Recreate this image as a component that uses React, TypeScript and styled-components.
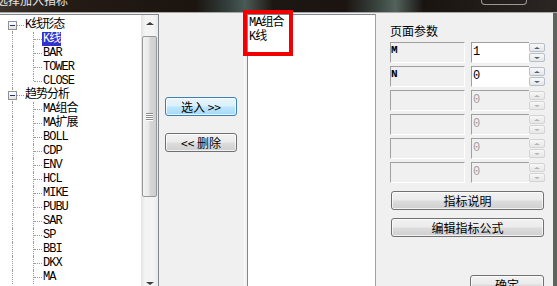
import React from "react";
import styled, { createGlobalStyle, css } from "styled-components";

const GlobalStyle = createGlobalStyle`
  html, body { margin: 0; padding: 0; }
  body {
    width: 557px;
    height: 286px;
    overflow: hidden;
    background: #1a1512;
    font-family: "Noto Sans CJK SC", "Liberation Sans", sans-serif;
    font-size: 12px;
  }
  * { box-sizing: border-box; }
`;

const Window = styled.div`
  width: 557px;
  height: 286px;
  overflow: hidden;
  display: flex;
  flex-direction: column;
  position: relative;
`;

const TitleBar = styled.div`
  height: 13px;
  flex: none;
  display: flex;
  align-items: flex-end;
  overflow: hidden;
  background: linear-gradient(90deg, #3d332b 0%, #241b15 12%, #1b140f 35%, #33403d 41%, #4b5a55 44%, #1d1713 49%, #1b1411 62%, #3b4742 68%, #53625c 71%, #1a1411 76%, #2b2623 100%);
  border-bottom: 1px solid #a7a7a7;
`;

const TitleText = styled.span`
  color: #e6e6e6;
  font-size: 12px;
  line-height: 12px;
  margin: 0 0 6px -4px;
  white-space: nowrap;
`;

const CaptionButton = styled.span`
  align-self: flex-start;
  width: 46px;
  height: 5px;
  margin-left: auto;
  margin-right: 30px;
  border: 1px solid rgba(220, 220, 220, 0.65);
  border-top: none;
  border-radius: 0 0 4px 4px;
`;

const Body = styled.div`
  flex: 1;
  display: flex;
  background: #f0f0f0;
  border-right: 4px solid #5f625f;
  padding-top: 1px;
  min-height: 0;
`;

const monoFont = css`
  font-family: "Liberation Mono", "Noto Sans CJK SC", monospace;
  font-size: 12px;
  letter-spacing: -1px;
  line-height: 14px;
`;

/* ---------- tree ---------- */

const TreePanel = styled.div`
  width: 159px;
  height: 278px;
  flex: none;
  display: flex;
  background: #fff;
  border-top: 1px solid #828790;
  border-right: 1px solid #828790;
`;

const TreeList = styled.div`
  flex: 1;
  padding-top: 3px;
  overflow: hidden;
`;

const TreeRow = styled.div`
  display: flex;
  height: 14px;
  ${monoFont};
  color: #000;
`;

const dotted = "1px dotted #9a9a9a";

const Rail = styled.span`
  width: 24px;
  height: 14px;
  flex: none;
  position: relative;
  &::before {
    content: "";
    position: absolute;
    left: 12px;
    top: 0;
    bottom: 0;
    border-left: ${dotted};
  }
`;

const Branch = styled.span<{ $last?: boolean }>`
  width: 18px;
  height: 14px;
  flex: none;
  position: relative;
  &::before {
    content: "";
    position: absolute;
    left: 9px;
    top: 0;
    bottom: ${(p) => (p.$last ? "7px" : "0")};
    border-left: ${dotted};
  }
  &::after {
    content: "";
    position: absolute;
    left: 10px;
    width: 8px;
    top: 7px;
    border-top: ${dotted};
  }
`;

const ExpanderCell = styled.span<{ $first?: boolean }>`
  width: 24px;
  height: 14px;
  flex: none;
  position: relative;
  &::before {
    content: "";
    position: absolute;
    left: 12px;
    top: ${(p) => (p.$first ? "11px" : "0")};
    bottom: 0;
    border-left: ${dotted};
  }
  &::after {
    content: "";
    position: absolute;
    left: 17px;
    width: 7px;
    top: 7px;
    border-top: ${dotted};
  }
`;

const ExpanderBox = styled.span`
  position: absolute;
  left: 8px;
  top: 3px;
  width: 9px;
  height: 9px;
  z-index: 1;
  border: 1px solid #919191;
  background: linear-gradient(180deg, #ffffff, #e2e2e2);
  &::after {
    content: "";
    position: absolute;
    left: 1px;
    top: 3px;
    width: 5px;
    border-top: 1px solid #1e3287;
  }
`;

const NodeLabel = styled.span<{ $selected?: boolean }>`
  padding: 0 1px;
  height: 14px;
  white-space: nowrap;
  ${(p) =>
    p.$selected &&
    css`
      background: #3131cc;
      color: #fff;
    `}
`;

/* ---------- scrollbar ---------- */

const ScrollBar = styled.div`
  width: 17px;
  flex: none;
  display: flex;
  flex-direction: column;
  background: linear-gradient(90deg, #e4e4e4, #f4f4f4 25%, #f4f4f4 75%, #e9e9e9);
`;

const ScrollButton = styled.div`
  height: 17px;
  flex: none;
  display: flex;
  align-items: center;
  justify-content: center;
`;

const Arrow = styled.span<{ $dir: "up" | "down"; $size?: number; $color?: string }>`
  width: 0;
  height: 0;
  border-left: ${(p) => p.$size ?? 4}px solid transparent;
  border-right: ${(p) => p.$size ?? 4}px solid transparent;
  ${(p) =>
    p.$dir === "up"
      ? css`border-bottom: ${(p.$size ?? 4) - 1}px solid ${p.$color ?? "#3c3c3c"};`
      : css`border-top: ${(p.$size ?? 4) - 1}px solid ${p.$color ?? "#3c3c3c"};`}
`;

const Thumb = styled.div`
  height: 161px;
  margin: 4px 1px 0 1px;
  border: 1px solid #979797;
  border-radius: 2px;
  background: linear-gradient(90deg, #f3f3f3, #e8e8e8 45%, #d6d6d6 55%, #cfcfcf);
  display: flex;
  flex-direction: column;
  align-items: center;
  justify-content: center;
  gap: 1px;
`;

const Grip = styled.span`
  width: 7px;
  height: 1px;
  background: #8a8a8a;
  box-shadow: 0 1px 0 #fff;
`;

const Track = styled.div`
  flex: 1;
`;

/* ---------- middle ---------- */

const Middle = styled.div`
  width: 86px;
  flex: none;
  display: flex;
  flex-direction: column;
  gap: 17px;
  padding: 83px 0 0 6px;
  border-right: 1px solid #fcfcfc;
`;

const Button = styled.button<{ $w: number; $focused?: boolean }>`
  width: ${(p) => p.$w}px;
  height: 19px;
  padding: 0;
  flex: none;
  font-family: "Noto Sans CJK SC", "Liberation Sans", sans-serif;
  font-size: 12px;
  line-height: 17px;
  color: #000;
  border: 1px solid #707070;
  border-radius: 3px;
  background: linear-gradient(180deg, #f2f2f2 0%, #ebebeb 48%, #dddddd 52%, #cfcfcf 100%);
  box-shadow: inset 0 0 0 1px rgba(255, 255, 255, 0.7);
  white-space: pre;
  ${(p) =>
    p.$focused &&
    css`
      border-color: #3c7fb1;
      background: linear-gradient(180deg, #eaf6fd 0%, #d9f0fc 48%, #bee6fd 52%, #a7d9f5 100%);
    `}
`;

/* ---------- list ---------- */

const ListBox = styled.div`
  width: 129px;
  flex: none;
  margin-left: 2px;
  background: #fff;
  border-top: 1px solid #828790;
  border-left: 1px solid #828790;
  border-right: 1px solid #a0a0a0;
  padding: 1px 0 0 1px;
`;

const ListItem = styled.div`
  ${monoFont};
  height: 14px;
  color: #000;
`;

/* ---------- params ---------- */

const RightPanel = styled.div`
  flex: 1;
  display: flex;
  flex-direction: column;
  padding: 9px 0 0 14px;
`;

const PanelTitle = styled.div`
  font-size: 12px;
  line-height: 16px;
  height: 16px;
  color: #000;
  margin-bottom: 3px;
`;

const ParamList = styled.div`
  display: flex;
  flex-direction: column;
  gap: 3px;
`;

const ParamRow = styled.div`
  display: flex;
  height: 21px;
`;

const sunken = css`
  border-style: solid;
  border-width: 1px;
  border-color: #a0a0a0 #ffffff #ffffff #a0a0a0;
`;

const ParamName = styled.div`
  width: 75px;
  height: 21px;
  margin-right: 6px;
  ${sunken};
  background: #f0f0f0;
  font-family: "Liberation Mono", monospace;
  font-weight: bold;
  font-size: 11px;
  line-height: 14px;
  color: #000;
`;

const SpinEdit = styled.div<{ $disabled?: boolean }>`
  width: 58px;
  height: 21px;
  ${sunken};
  border-right: none;
  background: ${(p) => (p.$disabled ? "#f0f0f0" : "#fff")};
  color: ${(p) => (p.$disabled ? "#a0a0a0" : "#000")};
  font-family: "Liberation Mono", monospace;
  font-size: 12px;
  line-height: 16px;
  padding: 1px 0 0 1px;
`;

const SpinButtons = styled.div`
  width: 16px;
  height: 21px;
  display: flex;
  flex-direction: column;
  gap: 1px;
  padding: 1px 0;
  background: #f0f0f0;
`;

const SpinHalf = styled.div<{ $disabled?: boolean }>`
  flex: 1;
  display: flex;
  align-items: center;
  justify-content: center;
  border: 1px solid ${(p) => (p.$disabled ? "#d4d4d4" : "#b6c0cc")};
  border-radius: 2px;
  background: linear-gradient(180deg, #f8f8f8, #e6e6e6);
`;

const ActionStack = styled.div`
  display: flex;
  flex-direction: column;
  padding-left: 1px;
`;

const Annotation = styled.div`
  position: absolute;
  left: 243px;
  top: 10px;
  width: 50px;
  height: 46px;
  border: 4px solid #f00000;
  pointer-events: none;
`;

type Root = { label: string; children: string[] };

const tree: Root[] = [
  { label: "K线形态", children: ["K线", "BAR", "TOWER", "CLOSE"] },
  {
    label: "趋势分析",
    children: ["MA组合", "MA扩展", "BOLL", "CDP", "ENV", "HCL", "MIKE", "PUBU", "SAR", "SP", "BBI", "DKX", "MA"],
  },
];

const params = [
  { name: "M", value: "1", enabled: true },
  { name: "N", value: "0", enabled: true },
  { name: "", value: "0", enabled: false },
  { name: "", value: "0", enabled: false },
  { name: "", value: "0", enabled: false },
  { name: "", value: "0", enabled: false },
];

export default function App() {
  return (
    <Window>
      <GlobalStyle />
      <TitleBar>
        <TitleText>选择加入指标</TitleText>
        <CaptionButton />
      </TitleBar>
      <Body>
        <TreePanel>
          <TreeList>
            {tree.map((root, ri) => (
              <React.Fragment key={root.label}>
                <TreeRow>
                  <ExpanderCell $first={ri === 0}>
                    <ExpanderBox />
                  </ExpanderCell>
                  <NodeLabel>{root.label}</NodeLabel>
                </TreeRow>
                {root.children.map((c, ci) => (
                  <TreeRow key={c}>
                    <Rail />
                    <Branch $last={ri === 0 && ci === root.children.length - 1} />
                    <NodeLabel $selected={ri === 0 && ci === 0}>{c}</NodeLabel>
                  </TreeRow>
                ))}
              </React.Fragment>
            ))}
          </TreeList>
          <ScrollBar>
            <ScrollButton>
              <Arrow $dir="up" />
            </ScrollButton>
            <Thumb>
              <Grip />
              <Grip />
              <Grip />
              <Grip />
            </Thumb>
            <Track />
            <ScrollButton>
              <Arrow $dir="down" />
            </ScrollButton>
          </ScrollBar>
        </TreePanel>

        <Middle>
          <Button $w={72} $focused>{"选入 >>"}</Button>
          <Button $w={72}>{"<< 删除"}</Button>
        </Middle>

        <ListBox>
          <ListItem>MA组合</ListItem>
          <ListItem>K线</ListItem>
        </ListBox>

        <RightPanel>
          <PanelTitle>页面参数</PanelTitle>
          <ParamList>
            {params.map((p, i) => (
              <ParamRow key={i}>
                <ParamName>{p.name}</ParamName>
                <SpinEdit $disabled={!p.enabled}>{p.value}</SpinEdit>
                <SpinButtons>
                  <SpinHalf $disabled={!p.enabled}>
                    <Arrow $dir="up" $size={3} $color={p.enabled ? "#4a5f80" : "#b4b4b4"} />
                  </SpinHalf>
                  <SpinHalf $disabled={!p.enabled}>
                    <Arrow $dir="down" $size={3} $color={p.enabled ? "#4a5f80" : "#b4b4b4"} />
                  </SpinHalf>
                </SpinButtons>
              </ParamRow>
            ))}
          </ParamList>
          <ActionStack>
            <Button $w={153} style={{ marginTop: 8 }}>指标说明</Button>
            <Button $w={153} style={{ marginTop: 8 }}>编辑指标公式</Button>
            <Button $w={74} style={{ marginTop: 38, marginLeft: 79 }}>确定</Button>
          </ActionStack>
        </RightPanel>
      </Body>
      <Annotation />
    </Window>
  );
}
